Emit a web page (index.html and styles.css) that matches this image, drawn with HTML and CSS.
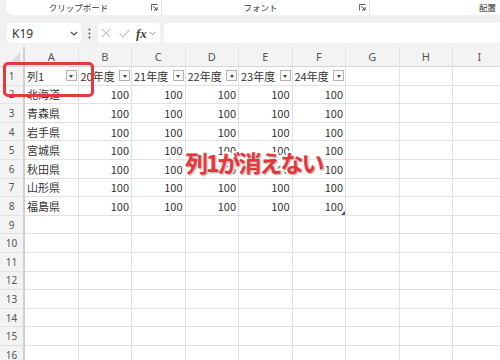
FILE: index.html
```html
<!DOCTYPE html>
<html lang="ja">
<head>
<meta charset="utf-8">
<link rel="stylesheet" href="styles.css">
</head>
<body>
<div class="app">
  <div class="ribbon">
    <div class="ribbon-panel">
      <div class="group g1"><span class="glabel">クリップボード</span><svg class="launcher" viewBox="0 0 7 7"><path d="M0.5 6.5V0.5H6.5" fill="none" stroke="#666" stroke-width="1"/><path d="M2.5 2.5L5.8 5.8M3 6H6V3" fill="none" stroke="#444" stroke-width="1"/></svg></div>
      <div class="group g2"><span class="glabel">フォント</span><svg class="launcher" viewBox="0 0 7 7"><path d="M0.5 6.5V0.5H6.5" fill="none" stroke="#666" stroke-width="1"/><path d="M2.5 2.5L5.8 5.8M3 6H6V3" fill="none" stroke="#444" stroke-width="1"/></svg></div>
      <div class="group g3"><span class="glabel">配置</span></div>
    </div>
  </div>
  <div class="fbar">
    <div class="namebox"><span>K19</span><svg class="chev" viewBox="0 0 8 5"><path d="M0.8 0.8L4 4L7.2 0.8" fill="none" stroke="#444" stroke-width="1.1"/></svg></div>
    <div class="dots"><svg viewBox="0 0 3 11" width="3" height="11"><circle cx="1.5" cy="1.5" r="1" fill="#555"/><circle cx="1.5" cy="5.5" r="1" fill="#555"/><circle cx="1.5" cy="9.5" r="1" fill="#555"/></svg></div>
    <div class="fxbox">
      <svg class="ico-x" viewBox="0 0 10 10"><path d="M0.8 0.8L9.2 9.2M9.2 0.8L0.8 9.2" stroke="#c2c2c2" stroke-width="1.1" fill="none"/></svg>
      <svg class="ico-ok" viewBox="0 0 11 9"><path d="M0.6 4.6L3.8 7.8L10.4 0.8" stroke="#c2c2c2" stroke-width="1.1" fill="none"/></svg>
      <span class="fx">fx</span>
      <svg class="chev2" viewBox="0 0 8 5"><path d="M0.8 0.8L4 4L7.2 0.8" fill="none" stroke="#777" stroke-width="1"/></svg>
    </div>
    <div class="finput"></div>
  </div>

  <div class="sheet">
    <div class="c corner"><svg viewBox="0 0 25 20" width="25" height="20"><polygon points="22,5 22,17 10,17" fill="#dcdcdc"/></svg></div>
    <div class="c ch">A</div><div class="c ch">B</div><div class="c ch">C</div><div class="c ch">D</div><div class="c ch">E</div><div class="c ch">F</div><div class="c ch">G</div><div class="c ch">H</div><div class="c ch">I</div>

    <div class="c rh">1</div>
    <div class="c th"><span>列1</span><span class="fb"></span></div>
    <div class="c th"><span>20年度</span><span class="fb"></span></div>
    <div class="c th"><span>21年度</span><span class="fb"></span></div>
    <div class="c th"><span>22年度</span><span class="fb"></span></div>
    <div class="c th"><span>23年度</span><span class="fb"></span></div>
    <div class="c th"><span>24年度</span><span class="fb"></span></div>
    <div class="c"></div><div class="c"></div><div class="c"></div>

    <div class="c rh">2</div><div class="c">北海道</div><div class="c num">100</div><div class="c num">100</div><div class="c num">100</div><div class="c num">100</div><div class="c num">100</div><div class="c"></div><div class="c"></div><div class="c"></div>
    <div class="c rh">3</div><div class="c">青森県</div><div class="c num">100</div><div class="c num">100</div><div class="c num">100</div><div class="c num">100</div><div class="c num">100</div><div class="c"></div><div class="c"></div><div class="c"></div>
    <div class="c rh">4</div><div class="c">岩手県</div><div class="c num">100</div><div class="c num">100</div><div class="c num">100</div><div class="c num">100</div><div class="c num">100</div><div class="c"></div><div class="c"></div><div class="c"></div>
    <div class="c rh">5</div><div class="c">宮城県</div><div class="c num">100</div><div class="c num">100</div><div class="c num">100</div><div class="c num">100</div><div class="c num">100</div><div class="c"></div><div class="c"></div><div class="c"></div>
    <div class="c rh">6</div><div class="c">秋田県</div><div class="c num">100</div><div class="c num">100</div><div class="c num">100</div><div class="c num">100</div><div class="c num">100</div><div class="c"></div><div class="c"></div><div class="c"></div>
    <div class="c rh">7</div><div class="c">山形県</div><div class="c num">100</div><div class="c num">100</div><div class="c num">100</div><div class="c num">100</div><div class="c num">100</div><div class="c"></div><div class="c"></div><div class="c"></div>
    <div class="c rh">8</div><div class="c">福島県</div><div class="c num">100</div><div class="c num">100</div><div class="c num">100</div><div class="c num">100</div><div class="c num">100</div><div class="c"></div><div class="c"></div><div class="c"></div>

    <div class="c rh">9</div><div class="c"></div><div class="c"></div><div class="c"></div><div class="c"></div><div class="c"></div><div class="c"></div><div class="c"></div><div class="c"></div><div class="c"></div>
    <div class="c rh">10</div><div class="c"></div><div class="c"></div><div class="c"></div><div class="c"></div><div class="c"></div><div class="c"></div><div class="c"></div><div class="c"></div><div class="c"></div>
    <div class="c rh">11</div><div class="c"></div><div class="c"></div><div class="c"></div><div class="c"></div><div class="c"></div><div class="c"></div><div class="c"></div><div class="c"></div><div class="c"></div>
    <div class="c rh">12</div><div class="c"></div><div class="c"></div><div class="c"></div><div class="c"></div><div class="c"></div><div class="c"></div><div class="c"></div><div class="c"></div><div class="c"></div>
    <div class="c rh">13</div><div class="c"></div><div class="c"></div><div class="c"></div><div class="c"></div><div class="c"></div><div class="c"></div><div class="c"></div><div class="c"></div><div class="c"></div>
    <div class="c rh">14</div><div class="c"></div><div class="c"></div><div class="c"></div><div class="c"></div><div class="c"></div><div class="c"></div><div class="c"></div><div class="c"></div><div class="c"></div>
    <div class="c rh">15</div><div class="c"></div><div class="c"></div><div class="c"></div><div class="c"></div><div class="c"></div><div class="c"></div><div class="c"></div><div class="c"></div><div class="c"></div>
    <div class="c rh">16</div><div class="c"></div><div class="c"></div><div class="c"></div><div class="c"></div><div class="c"></div><div class="c"></div><div class="c"></div><div class="c"></div><div class="c"></div>
  </div>

  <div class="callout"></div>
  <div class="note">列1が消えない</div>
  <div class="handle"></div>
</div>
</body>
</html>
```

FILE: styles.css
```css
html, body {
  margin: 0;
  padding: 0;
}
body {
  width: 500px;
  height: 360px;
  overflow: hidden;
  background: #f1f1f1;
  font-family: "Noto Sans CJK JP", sans-serif;
}
.app {
  position: relative;
  width: 500px;
  height: 360px;
  overflow: hidden;
}

/* ribbon */
.ribbon {
  height: 20px;
}
.ribbon-panel {
  margin-left: 6px;
  height: 15px;
  background: #fff;
  border-radius: 0 0 0 7px;
  display: flex;
}
.group {
  display: flex;
  align-items: center;
  height: 100%;
  box-sizing: border-box;
  border-right: 1px solid #e4e4e4;
}
.g1 { width: 156px; }
.g2 { width: 208px; }
.g3 {
  flex: 1;
  border-right: none;
  padding-right: 4px;
}
.g3 .glabel { text-align: right; }
.glabel {
  flex: 1;
  text-align: center;
  font-size: 8.5px;
  line-height: 15px;
  color: #333;
  white-space: nowrap;
}
.launcher {
  width: 7px;
  height: 7px;
  margin-right: 3px;
}

/* formula bar */
.fbar {
  display: flex;
  align-items: center;
  height: 20px;
  margin-top: 3px;
  margin-bottom: 4px;
}
.namebox {
  margin-left: 7px;
  width: 74px;
  height: 20px;
  box-sizing: border-box;
  background: #fff;
  border-radius: 4px;
  display: flex;
  align-items: center;
  justify-content: space-between;
  padding: 0 3px 0 5px;
  font-family: "Noto Sans", "Open Sans", sans-serif;
  font-size: 12px;
  color: #333;
}
.chev {
  width: 8px;
  height: 5px;
}
.dots {
  width: 17px;
  display: flex;
  justify-content: center;
  align-items: center;
}
.fxbox {
  width: 62px;
  height: 20px;
  box-sizing: border-box;
  background: #fff;
  border-radius: 4px;
  display: flex;
  align-items: center;
  padding-left: 3px;
}
.ico-x {
  width: 10px;
  height: 10px;
}
.ico-ok {
  width: 11px;
  height: 9px;
  margin-left: 8px;
}
.fx {
  margin-left: 6px;
  font-family: "Liberation Serif", serif;
  font-style: italic;
  font-weight: bold;
  font-size: 13px;
  color: #444;
  line-height: 1;
}
.chev2 {
  width: 7px;
  height: 5px;
  margin-left: 2px;
}
.finput {
  margin-left: 4px;
  flex: 1;
  height: 20px;
  background: #fff;
  border-radius: 4px 0 0 4px;
}

/* sheet */
.sheet {
  display: grid;
  grid-template-columns: 25px repeat(9, 53.5px);
  grid-template-rows: 20px repeat(16, 18.6px);
  background: #fff;
}
.c {
  box-sizing: border-box;
  border-right: 1px solid #e1e1e1;
  border-bottom: 1px solid #e1e1e1;
  display: flex;
  align-items: center;
  padding: 0 2px;
  overflow: hidden;
  white-space: nowrap;
  font-size: 11px;
  color: #333;
}
.corner {
  background: #f3f3f3;
  padding: 0;
  border-right: 2px solid #cfcfcf;
  border-bottom: 1px solid #d6d6d6;
}
.ch {
  background: #f3f3f3;
  justify-content: center;
  font-family: "Noto Sans", "Open Sans", sans-serif;
  font-size: 11px;
  color: #555;
  border-bottom: 1px solid #d6d6d6;
}
.rh {
  background: #f3f3f3;
  justify-content: center;
  font-family: "Noto Sans", "Open Sans", sans-serif;
  font-size: 10px;
  color: #555;
  border-right: 2px solid #cfcfcf;
}
.num {
  justify-content: flex-end;
  padding-right: 2px;
}
.th {
  justify-content: space-between;
  padding-right: 1px;
}
.fb {
  width: 11px;
  height: 11px;
  box-sizing: border-box;
  border: 1px solid #b3b3b3;
  background: #f8f8f8;
  position: relative;
  flex: none;
}
.fb::after {
  content: "";
  position: absolute;
  left: 2.5px;
  top: 4px;
  border-left: 2.5px solid transparent;
  border-right: 2.5px solid transparent;
  border-top: 3px solid #444;
}

/* overlays */
.callout {
  position: absolute;
  left: 3px;
  top: 62px;
  width: 91px;
  height: 35px;
  box-sizing: border-box;
  border: 3px solid #e53a3c;
  border-radius: 5px;
}
.note {
  position: absolute;
  left: 185px;
  top: 151px;
  font-size: 23px;
  font-weight: 700;
  line-height: 1;
  letter-spacing: -2px;
  color: #e8353c;
  -webkit-text-stroke: 4px #fff;
  paint-order: stroke fill;
  text-shadow: 1px 1px 2px rgba(0, 0, 0, 0.35);
  white-space: nowrap;
}
.handle {
  position: absolute;
  left: 341px;
  top: 211px;
  width: 0;
  height: 0;
  border-left: 4px solid transparent;
  border-bottom: 4px solid #2f4f9f;
}
```
